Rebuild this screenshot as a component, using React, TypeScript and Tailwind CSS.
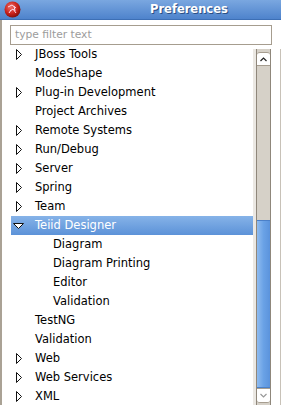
import React from "react";

type Row = { label: string; level: number; expander?: "closed" | "open"; selected?: boolean };

const rows: Row[] = [
  { label: "JBoss Tools", level: 0, expander: "closed" },
  { label: "ModeShape", level: 0 },
  { label: "Plug-in Development", level: 0, expander: "closed" },
  { label: "Project Archives", level: 0 },
  { label: "Remote Systems", level: 0, expander: "closed" },
  { label: "Run/Debug", level: 0, expander: "closed" },
  { label: "Server", level: 0, expander: "closed" },
  { label: "Spring", level: 0, expander: "closed" },
  { label: "Team", level: 0, expander: "closed" },
  { label: "Teiid Designer", level: 0, expander: "open", selected: true },
  { label: "Diagram", level: 1 },
  { label: "Diagram Printing", level: 1 },
  { label: "Editor", level: 1 },
  { label: "Validation", level: 1 },
  { label: "TestNG", level: 0 },
  { label: "Validation", level: 0 },
  { label: "Web", level: 0, expander: "closed" },
  { label: "Web Services", level: 0, expander: "closed" },
  { label: "XML", level: 0, expander: "closed" },
];

function Expander({ kind }: { kind?: "closed" | "open" }) {
  if (!kind) return <span className="w-[15px] shrink-0" />;
  return (
    <span className="w-[15px] shrink-0 flex items-center justify-center">
      {kind === "closed" ? (
        <svg width="8" height="11" viewBox="0 0 8 11">
          <path d="M1.5 0.5 L6.5 5.5 L1.5 10.5 Z" fill="#fff" stroke="#111" strokeWidth="1" strokeLinejoin="miter" />
        </svg>
      ) : (
        <svg width="11" height="8" viewBox="0 0 11 8">
          <path d="M0.5 1.5 L10.5 1.5 L5.5 6.5 Z" fill="#fff" stroke="#111" strokeWidth="1" />
        </svg>
      )}
    </span>
  );
}

function AppIcon() {
  return (
    <svg width="17" height="17" viewBox="0 0 17 17">
      <defs>
        <radialGradient id="rg" cx="0.4" cy="0.35" r="0.7">
          <stop offset="0" stopColor="#f0706a" />
          <stop offset="0.6" stopColor="#c8211b" />
          <stop offset="1" stopColor="#7a0c08" />
        </radialGradient>
      </defs>
      <circle cx="8.5" cy="8.5" r="8" fill="url(#rg)" />
      <path d="M4 6 L8 4 L12 7 M6 10 L9 8 L12 12 M5 12 L7 9 M10 5 L11 10" stroke="#fde" strokeWidth="1" fill="none" />
    </svg>
  );
}

export default function App() {
  return (
    <div className="w-[281px] h-[405px] overflow-hidden flex flex-col bg-[#edeae5] text-[11.5px] text-black" style={{ fontFamily: '"DejaVu Sans", sans-serif' }}>
      {/* title bar */}
      <div className="h-[20px] shrink-0 flex items-center bg-gradient-to-b from-[#7aa7e0] to-[#4e83cc] border-b border-[#3d6fb5]">
        <span className="ml-[4px]"><AppIcon /></span>
        <span className="ml-[129px] mt-[1px] font-bold text-[11.5px] text-white [text-shadow:1px_1px_0_#2a4f85]">Preferences</span>
      </div>

      <div className="flex-1 flex flex-col border-l-2 border-[#aaa295] bg-white min-h-0">
        {/* filter */}
        <div className="pt-[5px] pl-[8px] pr-[9px] pb-[4px] bg-white">
          <div className="h-[20px] border border-[#a69d8f] bg-white flex items-center pl-[4px] text-[10.7px] text-[#9c9c9c]">type filter text</div>
        </div>

        <div className="flex-1 flex min-h-0">
          {/* tree */}
          <div className="flex-1 overflow-hidden bg-white">
            <div className="mt-[-4px]">
              {rows.map((r, i) => (
                <div
                  key={i}
                  className={
                    "h-[19px] flex items-center ml-[9px] " +
                    (r.selected ? "bg-gradient-to-b from-[#86b3e8] to-[#5c92d8] text-white" : "")
                  }
                >
                  {r.level === 1 && <span className="w-[18px] shrink-0" />}
                  <Expander kind={r.expander} />
                  <span className="ml-[9px] whitespace-nowrap">{r.label}</span>
                </div>
              ))}
            </div>
          </div>

          {/* scrollbar */}
          <div className="w-[28px] shrink-0 flex bg-white">
            <div className="w-[3px] bg-[#ebe8e3]" />
            <div className="w-[15px] flex flex-col bg-[#d6d1c8] border-x border-[#8f877b]">
              <div className="h-[14px] mt-[3px] bg-white border-y border-[#a69d8f] rounded-t-[3px] flex items-center justify-center">
                <svg width="7" height="5" viewBox="0 0 7 5"><path d="M0.5 4 L3.5 1 L6.5 4" stroke="#222" strokeWidth="1.2" fill="none" /></svg>
              </div>
              <div className="h-[154px]" />
              <div className="flex-1 bg-gradient-to-r from-[#8fbcf0] via-[#6aa2e6] to-[#5b93dc] border-y border-[#4b80c8]" />
              <div className="h-[15px] mb-[2px] bg-white border-y border-[#a69d8f] rounded-b-[3px] flex items-center justify-center">
                <svg width="7" height="5" viewBox="0 0 7 5"><path d="M0.5 1 L3.5 4 L6.5 1" stroke="#999" strokeWidth="1.2" fill="none" /></svg>
              </div>
            </div>
            <div className="flex-1 border-r border-[#c8c2b8]" />
          </div>
        </div>
      </div>
    </div>
  );
}
